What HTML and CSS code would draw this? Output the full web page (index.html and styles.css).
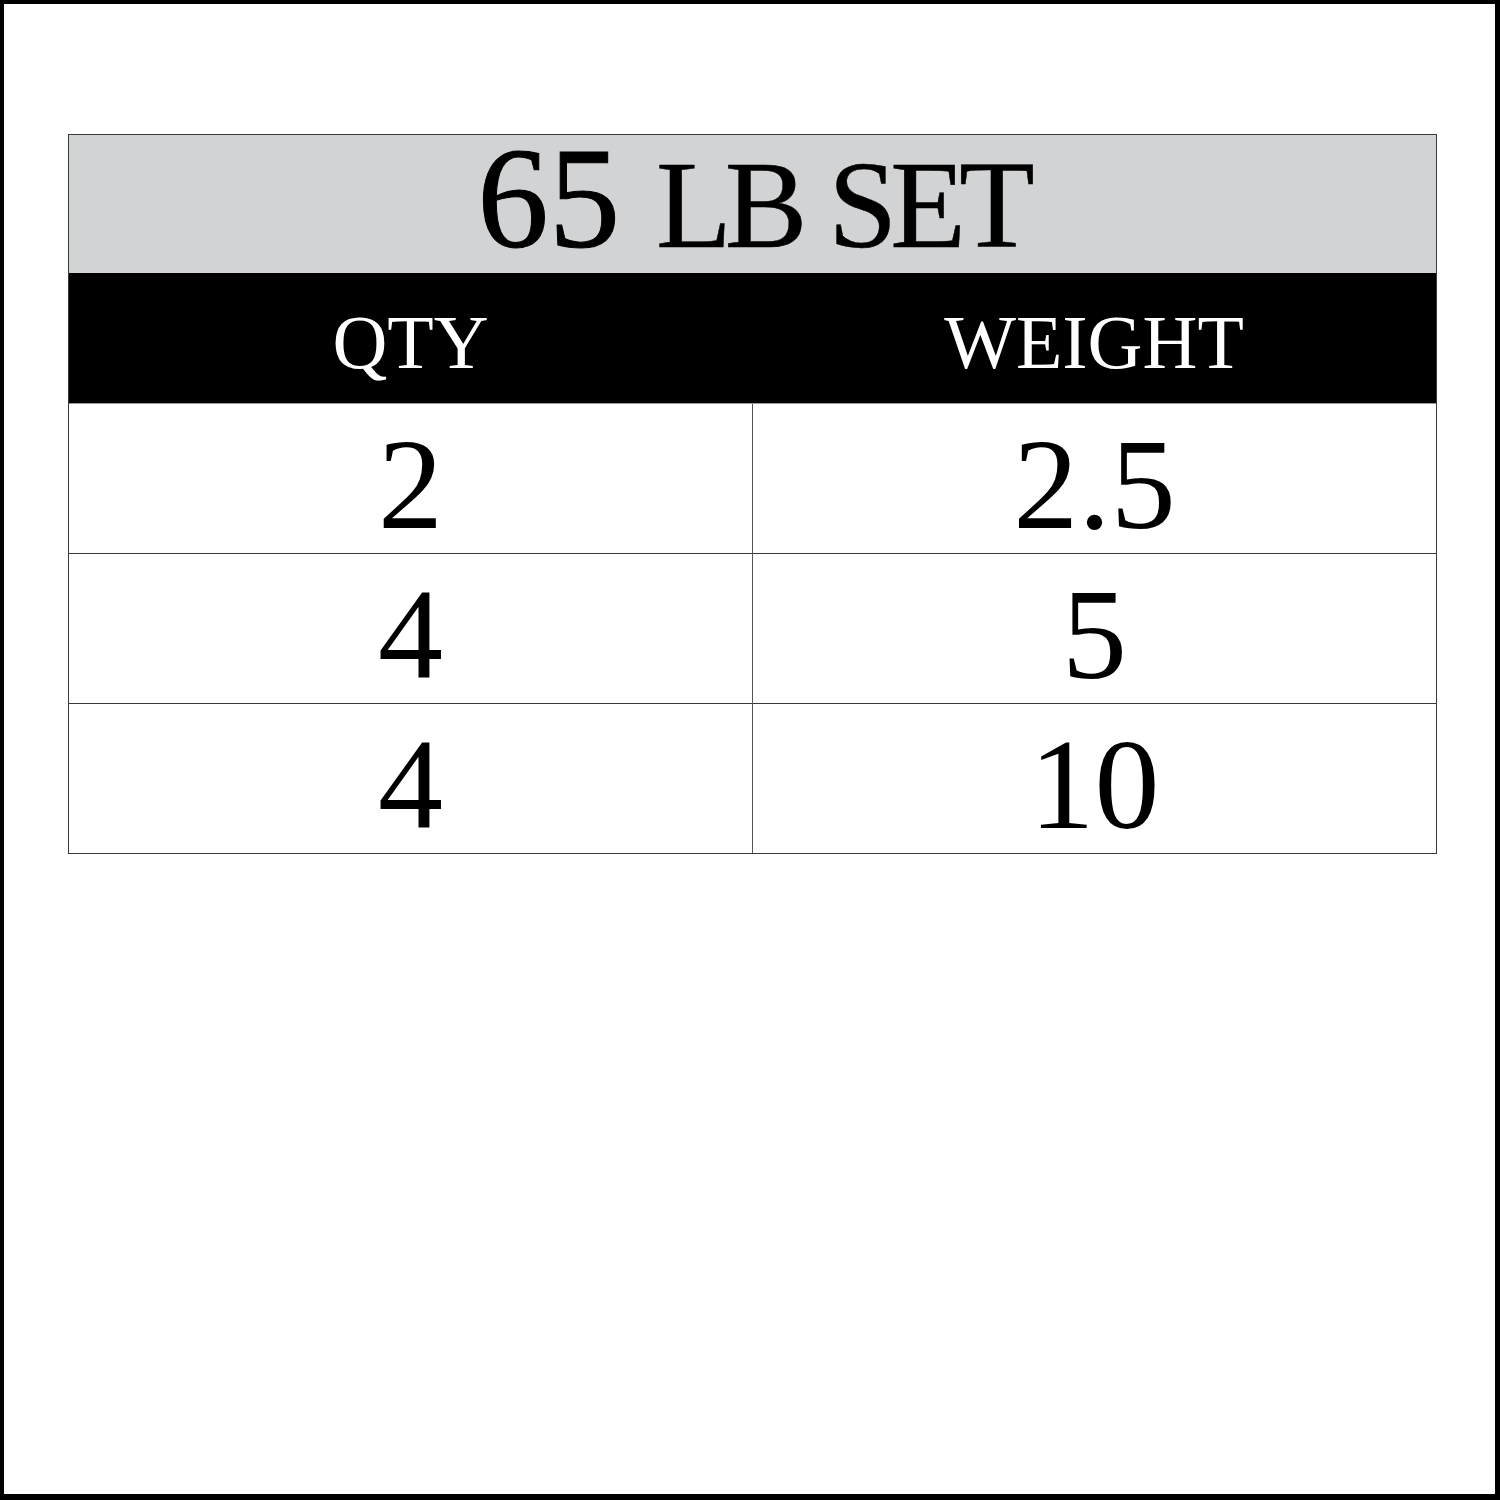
FILE: index.html
```html
<!DOCTYPE html>
<html>
<head>
<meta charset="utf-8">
<link rel="stylesheet" href="styles.css">
</head>
<body>
<div class="page">
  <div class="chart">
    <div class="title"><span class="num">65</span> <span class="caps">LB SET</span></div>
    <div class="head">QTY</div>
    <div class="head">WEIGHT</div>
    <div class="cell">2</div>
    <div class="cell right">2.5</div>
    <div class="cell">4</div>
    <div class="cell right">5</div>
    <div class="cell last">4</div>
    <div class="cell right last">10</div>
  </div>
</div>
</body>
</html>
```

FILE: styles.css
```css
html, body {
  margin: 0;
  padding: 0;
  background: #fff;
}
.page {
  width: 1500px;
  height: 1500px;
  box-sizing: border-box;
  border-style: solid;
  border-color: #000;
  border-width: 4px 5px 6px 4px;
  padding: 130px 58px 0 64px;
  font-family: "Liberation Serif", "Times New Roman", serif;
  color: #000;
}
.chart {
  width: 1369px;
  box-sizing: border-box;
  border: 1px solid #3a3a3a;
  display: grid;
  grid-template-columns: 683px 1fr;
}
.title {
  grid-column: 1 / 3;
  background: #d1d3d4;
  height: 138px;
  text-align: center;
  font-size: 143px;
  line-height: 128px;
  white-space: nowrap;
  -webkit-text-stroke: 1px #000;
}
.title .caps {
  font-size: 124px;
  letter-spacing: -7px;
  word-spacing: 4px;
  -webkit-text-stroke: 0.5px #000;
}
.head {
  background: #000;
  color: #fff;
  height: 131px;
  box-sizing: border-box;
  padding-top: 8px;
  font-size: 76px;
  line-height: 123px;
  text-align: center;
  border-bottom: 1px solid #9a9a9a;
}
.cell {
  height: 150px;
  box-sizing: border-box;
  padding-top: 11px;
  font-size: 130px;
  line-height: 138px;
  text-align: center;
  border-bottom: 1px solid #3a3a3a;
}
.cell.right {
  border-left: 1px solid #555;
}
.cell.last {
  border-bottom: none;
  height: 149px;
}
```
